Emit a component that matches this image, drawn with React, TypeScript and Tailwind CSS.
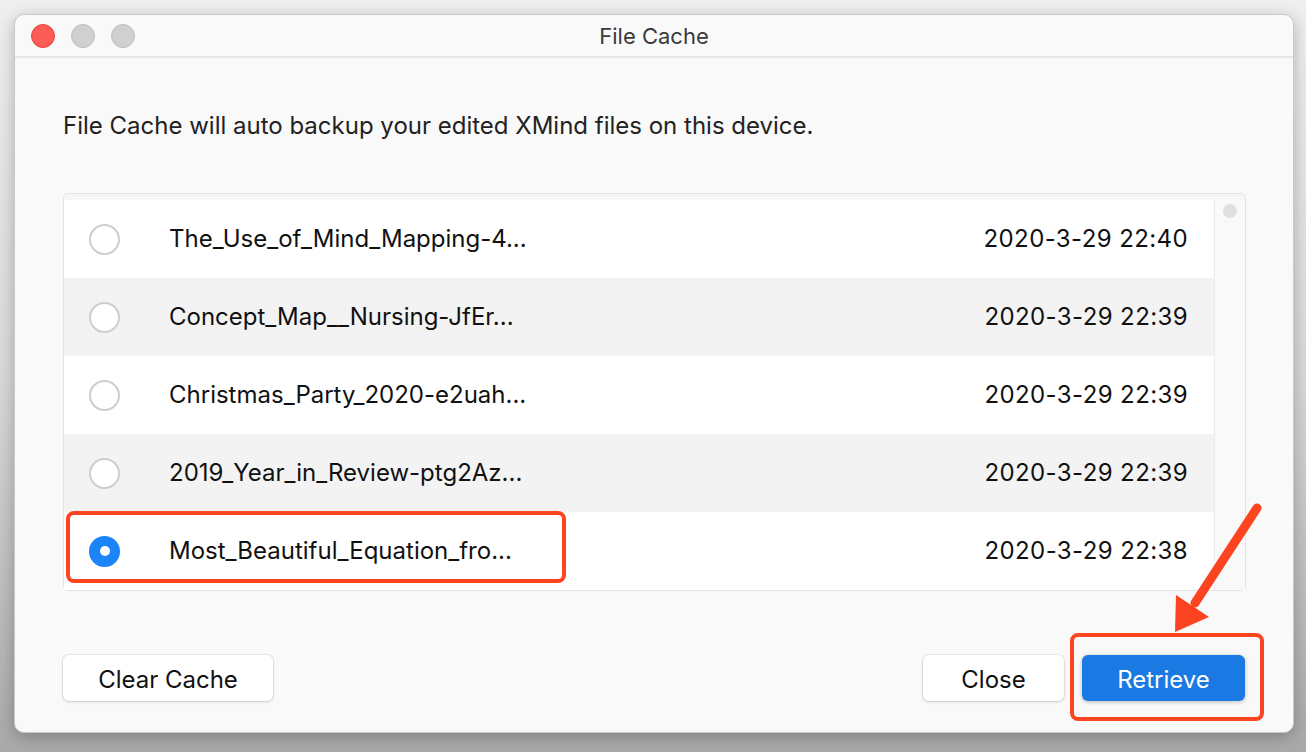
import React from 'react';

const rows = [
  { name: 'The_Use_of_Mind_Mapping-4...', date: '2020-3-29 22:40' },
  { name: 'Concept_Map__Nursing-JfEr...', date: '2020-3-29 22:39' },
  { name: 'Christmas_Party_2020-e2uah...', date: '2020-3-29 22:39' },
  { name: '2019_Year_in_Review-ptg2Az...', date: '2020-3-29 22:39' },
  { name: 'Most_Beautiful_Equation_fro...', date: '2020-3-29 22:38', selected: true },
];

function Radio({ checked }: { checked?: boolean }) {
  if (checked) {
    return (
      <div className="w-[31px] h-[31px] rounded-full bg-[#1b84f6] flex items-center justify-center">
        <div className="w-[10px] h-[10px] rounded-full bg-white" />
      </div>
    );
  }
  return <div className="w-[31px] h-[31px] rounded-full border-2 border-[#cdcdcd] bg-white" />;
}

export default function App() {
  return (
    <div
      className="relative w-[1306px] h-[752px] overflow-hidden bg-gradient-to-b from-[#efefef] via-[#d9d9d9] to-[#a9a9a9] p-[14px] text-[#111]"
      style={{ fontFamily: 'Inter, "Noto Sans", sans-serif' }}
    >
      <div className="w-[1280px] h-[719px] rounded-[10px] bg-[#f9f9f9] border border-[#c9c9c9] shadow-[0_4px_16px_rgba(0,0,0,0.25)] flex flex-col overflow-hidden">
        {/* title bar */}
        <div className="relative h-[43px] shrink-0 border-b-2 border-[#e7e7e7] flex items-center px-[16px]">
          <div className="flex gap-[16px]">
            <div className="w-[24px] h-[24px] rounded-full bg-[#fd5b56] border border-[#e2463f]" />
            <div className="w-[24px] h-[24px] rounded-full bg-[#d0d0d0] border border-[#bdbdbd]" />
            <div className="w-[24px] h-[24px] rounded-full bg-[#d0d0d0] border border-[#bdbdbd]" />
          </div>
          <div className="absolute inset-0 pt-[2px] flex items-center justify-center text-[22px] text-[#3a3a3a] pointer-events-none">
            File Cache
          </div>
        </div>

        <div className="flex flex-col px-[48px] flex-1">
          <p className="mt-[53px] text-[24px] text-[#222] leading-[30px]">
            File Cache will auto backup your edited XMind files on this device.
          </p>

          {/* list */}
          <div className="mt-[52px] w-[1183px] h-[398px] rounded-[5px] border border-[#e3e3e3] bg-[#f6f6f6] flex pt-[6px]">
            <div className="flex-1 flex flex-col">
              {rows.map((r, i) => (
                <div
                  key={r.name}
                  className={`h-[78px] flex items-center pl-[25px] pr-[26px] ${i % 2 === 1 ? 'bg-[#f3f3f3]' : 'bg-white'}`}
                >
                  <Radio checked={r.selected} />
                  <span className="ml-[49px] text-[24px] text-[#111]">{r.name}</span>
                  <span className="ml-auto text-[24px] tracking-[0.4px] text-[#111]">{r.date}</span>
                </div>
              ))}
            </div>
            <div className="w-[31px] border-l border-[#ececec] bg-[#f9f9f9] flex justify-center pt-[4px]">
              <div className="w-[14px] h-[14px] rounded-full bg-[#e0e0e0]" />
            </div>
          </div>

          {/* buttons */}
          <div className="mt-[64px] flex items-center">
            <button className="w-[210px] h-[46px] pt-[3px] rounded-[6px] bg-white shadow-[0_0_0_1px_rgba(0,0,0,0.06),0_1px_3px_rgba(0,0,0,0.15)] text-[24px] text-[#111]">
              Clear Cache
            </button>
            <button className="ml-auto w-[141px] h-[46px] pt-[3px] rounded-[6px] bg-white shadow-[0_0_0_1px_rgba(0,0,0,0.06),0_1px_3px_rgba(0,0,0,0.15)] text-[24px] text-[#111]">
              Close
            </button>
            <button className="ml-[18px] w-[163px] h-[46px] pt-[3px] rounded-[6px] bg-[#1a79e2] shadow-[0_1px_4px_rgba(0,0,0,0.25)] text-[24px] text-white">
              Retrieve
            </button>
          </div>
        </div>
      </div>

      {/* annotations */}
      <div className="absolute left-[66px] top-[511px] w-[500px] h-[72px] rounded-[8px] border-[4px] border-[#fd4420]" />
      <div className="absolute left-[1070px] top-[633px] w-[194px] h-[88px] rounded-[8px] border-[4px] border-[#fd4420]" />
      <svg className="absolute left-0 top-0" width="1306" height="752" viewBox="0 0 1306 752">
        <line x1="1257" y1="508" x2="1195" y2="603" stroke="#fd4420" strokeWidth="9" strokeLinecap="round" />
        <polygon points="1175,632 1176,595 1209,617" fill="#fd4420" />
      </svg>
    </div>
  );
}
